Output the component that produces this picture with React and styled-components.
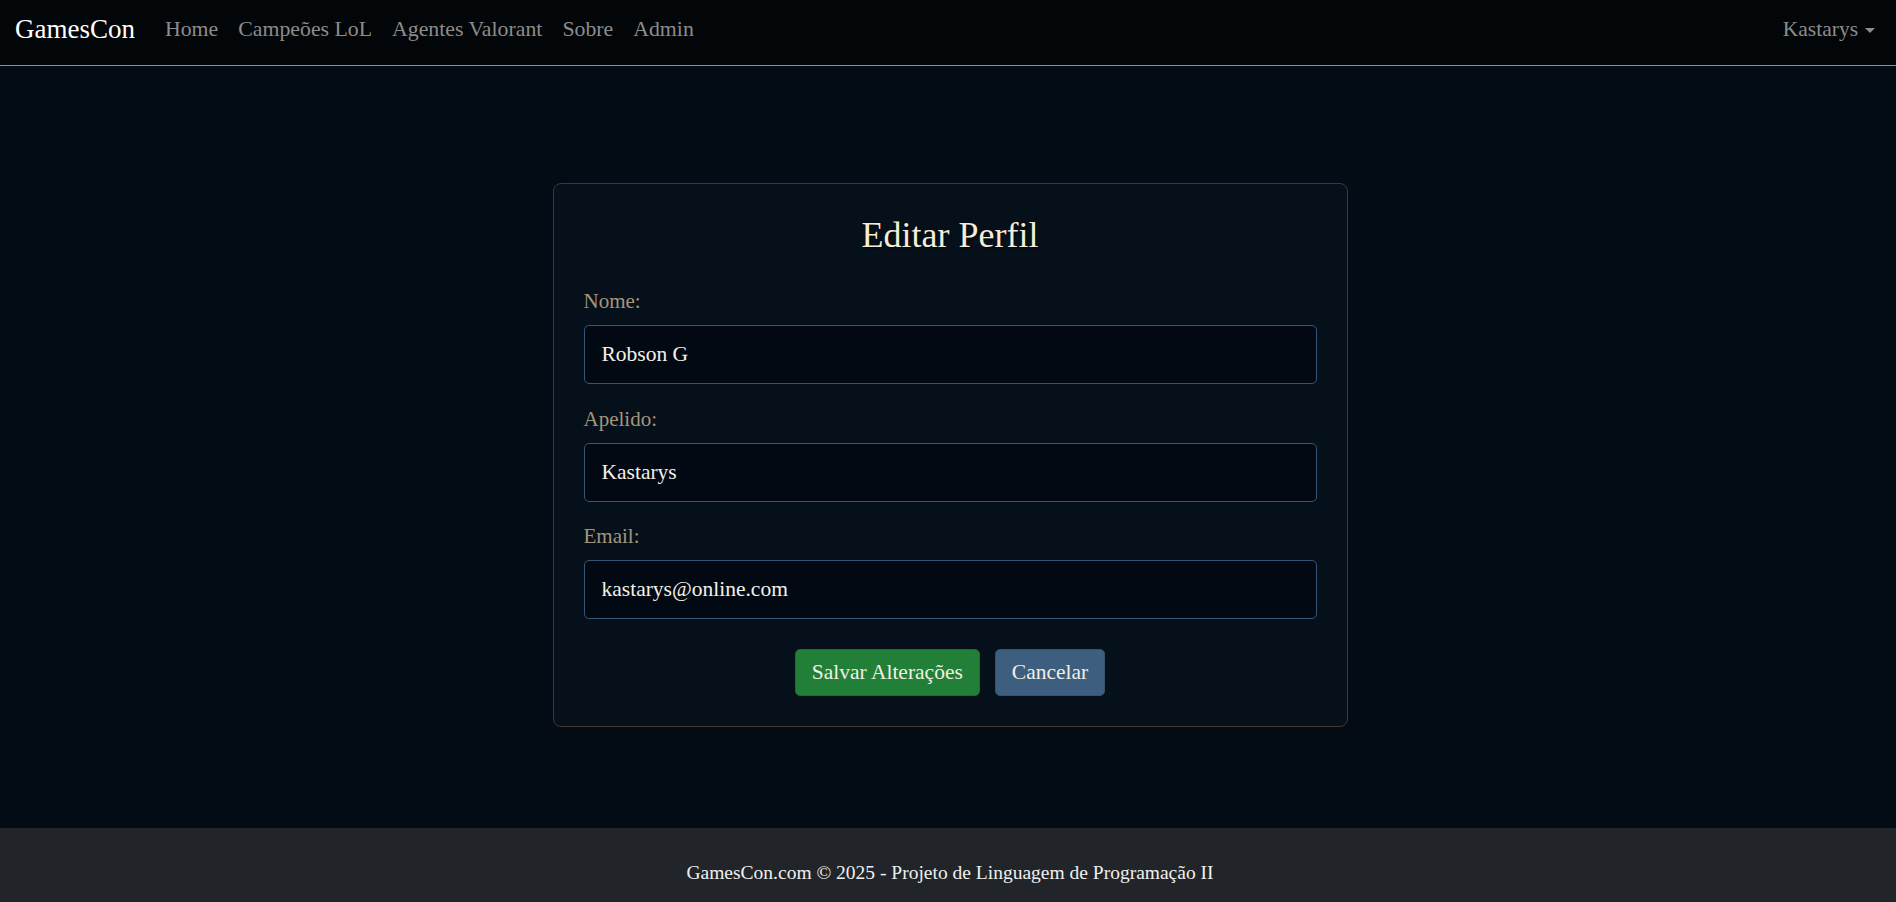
import React from 'react'
import styled, { createGlobalStyle } from 'styled-components'

const GlobalStyle = createGlobalStyle`
  * {
    box-sizing: border-box;
  }
  body {
    margin: 0;
    font-family: "Liberation Serif", "Times New Roman", serif;
    background-color: #030b14;
    color: #f0f0f0;
  }
`

const Page = styled.div`
  display: flex;
  flex-direction: column;
  min-height: 100vh;
`

const Navbar = styled.nav`
  display: flex;
  align-items: center;
  height: 66px;
  padding: 0 21px 6px 15px;
  background-color: #030609;
  border-bottom: 1px solid #b88a3e;
`

const Brand = styled.a`
  font-size: 27px;
  color: #ffffff;
  text-decoration: none;
  margin-right: 20px;
  cursor: pointer;
`

const NavList = styled.ul`
  display: flex;
  list-style: none;
  margin: 0;
  padding: 0;
  flex: 1;
`

const NavLink = styled.a`
  display: block;
  padding: 0 10px;
  font-size: 21.8px;
  color: #8c8c8c;
  text-decoration: none;
  cursor: pointer;
`

const UserToggle = styled.a`
  display: flex;
  align-items: center;
  font-size: 21.5px;
  color: #8c8c8c;
  cursor: pointer;

  &::after {
    content: '';
    margin-left: 7px;
    margin-top: 1px;
    border-top: 5px solid #8c8c8c;
    border-left: 5px solid transparent;
    border-right: 5px solid transparent;
  }
`

const Main = styled.main`
  flex: 1;
  padding: 117px 0 100px;
  background-color: #030b14;
`

const Card = styled.section`
  width: 795px;
  margin: 0 auto;
  padding: 30px;
  background-color: #06101a;
  border: 1px solid #44372a;
  border-radius: 8px;
  transform: translateX(2px);
`

const Title = styled.h2`
  margin: 0 0 29px;
  font-size: 36px;
  font-weight: normal;
  line-height: 43px;
  text-align: center;
  color: #f5ecd9;
  text-shadow: 1px 1px 2px rgba(0, 0, 0, 0.7);
`

const Field = styled.div`
  margin-bottom: 19.5px;
`

const Label = styled.label`
  display: block;
  font-size: 21px;
  line-height: 30px;
  margin-bottom: 9px;
  color: #a3957c;
`

const Input = styled.input`
  display: block;
  width: 100%;
  height: 59px;
  padding: 0 17px;
  font-family: inherit;
  font-size: 21.5px;
  color: #f4f1ea;
  background-color: #020912;
  border: 1px solid #35557a;
  border-radius: 5px;
  outline: none;
`

const Actions = styled.div`
  display: flex;
  justify-content: center;
  gap: 15px;
  margin-top: 30px;
`

const Button = styled.button`
  height: 47px;
  padding: 0 16px;
  font-family: inherit;
  font-size: 21.5px;
  color: #f3efe4;
  background-color: ${p => (p.$variant === 'save' ? '#217f37' : '#3d5e7e')};
  border: 1px solid ${p => (p.$variant === 'save' ? '#1b6c2e' : '#35526f')};
  border-radius: 5px;
  cursor: pointer;
`

const Footer = styled.footer`
  height: 74px;
  padding: 30px 0 0 4px;
  background-color: #212529;
  color: #f0f0f0;
  font-size: 19.5px;
  line-height: 29px;
  text-align: center;
`

const links = ['Home', 'Campeões LoL', 'Agentes Valorant', 'Sobre', 'Admin']

const fields = [
  { id: 'nome', label: 'Nome:', value: 'Robson G', type: 'text' },
  { id: 'apelido', label: 'Apelido:', value: 'Kastarys', type: 'text' },
  { id: 'email', label: 'Email:', value: 'kastarys@online.com', type: 'email' },
]

export default function App() {
  const handleSubmit = e => {
    e.preventDefault()
  }

  return (
    <Page>
      <GlobalStyle />
      <Navbar>
        <Brand>GamesCon</Brand>
        <NavList>
          {links.map(l => (
            <li key={l}>
              <NavLink>{l}</NavLink>
            </li>
          ))}
        </NavList>
        <UserToggle>Kastarys</UserToggle>
      </Navbar>

      <Main>
        <Card>
          <Title>Editar Perfil</Title>
          <form onSubmit={handleSubmit}>
            {fields.map(f => (
              <Field key={f.id}>
                <Label htmlFor={f.id}>{f.label}</Label>
                <Input id={f.id} type={f.type} defaultValue={f.value} />
              </Field>
            ))}
            <Actions>
              <Button type="submit" $variant="save">Salvar Alterações</Button>
              <Button type="button">Cancelar</Button>
            </Actions>
          </form>
        </Card>
      </Main>

      <Footer>GamesCon.com © 2025 - Projeto de Linguagem de Programação II</Footer>
    </Page>
  )
}
